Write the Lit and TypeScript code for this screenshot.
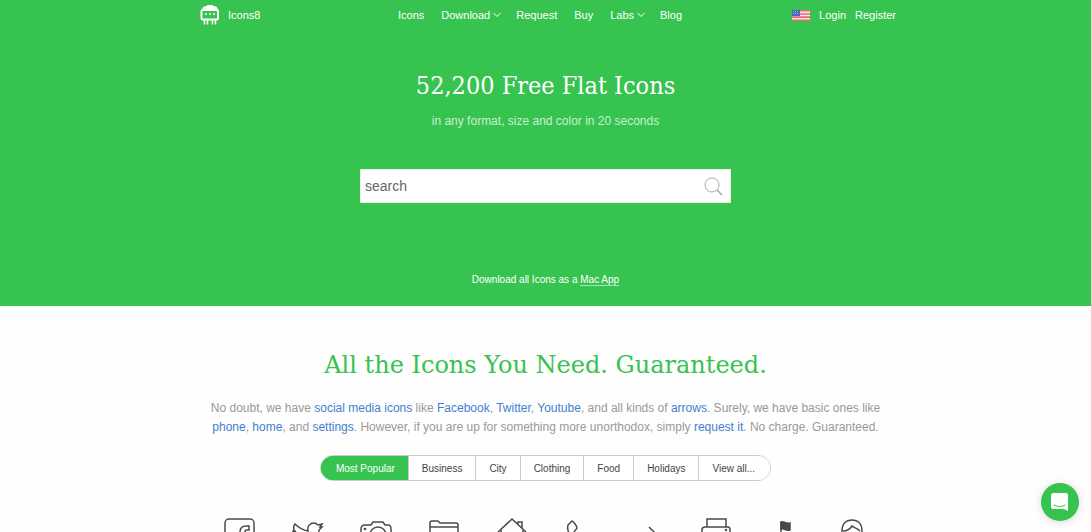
import { LitElement, html, css, svg } from "lit";
import { customElement, state } from "lit/decorators.js";
import { classMap } from "lit/directives/class-map.js";

const NAV = [
  { label: "Icons" },
  { label: "Download", menu: true },
  { label: "Request" },
  { label: "Buy" },
  { label: "Labs", menu: true },
  { label: "Blog" },
];

const TABS = ["Most Popular", "Business", "City", "Clothing", "Food", "Holidays", "View all..."];

const ICONS = [
  {
    name: "Facebook",
    art: svg`<rect x="2" y="2" width="29" height="29" rx="4"/><path d="M26 9h-3c-4 0-6 2-6 6v3h-3v4h3v9h5v-9h4v-4h-4v-3c0-1 1-2 2-2h2z"/>`,
  },
  {
    name: "Twitter",
    art: svg`<path d="M4 7c3 3 7 6 13 7-1-5 2-8 6-8 2 0 3 1 4 2l4-1-2 3h2l-3 3c0 11-7 17-16 17-4 0-7-1-10-3 4 0 6-1 8-3-3 0-5-2-6-4h3c-3-1-5-4-5-6l3 1c-3-2-3-5-1-8z"/>`,
  },
  {
    name: "Camera",
    art: svg`<path d="M2 12c0-3 1-4 4-4h6l2-3h10l2 3h3c2 0 3 1 3 4v14c0 2-1 3-3 3H5c-2 0-3-1-3-3z"/><circle cx="19" cy="18" r="8"/><circle cx="6" cy="12" r=".6"/>`,
  },
  {
    name: "Folder",
    art: svg`<path d="M3 29V6c0-1 1-2 2-2h6l2 2h16c1 0 2 1 2 2v21z"/><path d="M3 10h28"/>`,
  },
  {
    name: "Home",
    art: svg`<path d="M3 15L17 2l14 13M6 13v17h8V20h6v10h8V13M23 7V5h4v7"/>`,
  },
  {
    name: "Phone",
    art: svg`<path d="M5 8l4-4c1 0 5 5 5 7 0 1-3 3-3 4 0 2 6 8 8 8 1 0 2-3 4-3s6 4 6 5l-4 5c-8 2-23-14-20-22z"/>`,
  },
  {
    name: "Arrow",
    art: svg`<path d="M18 10l9 9-9 9M5 19h22"/>`,
  },
  {
    name: "Printer",
    art: svg`<path d="M8 10V2h19v8M8 23H3V13c0-2 1-3 3-3h23c1 0 2 1 2 3v10h-4M8 18h19v13H8z"/><circle cx="27" cy="13" r=".5"/>`,
  },
  {
    name: "Flag",
    art: svg`<path d="M14 5v26"/><path class="solid" d="M14 5c3-1 5 2 9 1v7c-4 1-6-2-9-1z"/>`,
  },
  {
    name: "Customer",
    art: svg`<path d="M7 14c0-7 4-11 10-11s10 4 10 11v3c0 6-4 12-10 12S7 23 7 17z"/><path d="M8 14c5 0 7-2 9-5 2 2 5 2 8 5"/>`,
  },
];

@customElement("app-root")
export class AppRoot extends LitElement {
  static styles = css`
    :host {
      display: block;
      height: 100vh;
      overflow-y: auto;
      scrollbar-width: none;
      background: #fefefe;
      font-family: "Liberation Sans", Arial, sans-serif;
      font-size: 11px;
      color: #999;
    }
    a { text-decoration: none; color: inherit; }
    h1, h2, p { margin: 0; font-weight: 400; }
    h1 {
      padding-top: 40px;
      font-family: "DejaVu Serif Condensed", "DejaVu Serif", serif;
      font-size: 25px;
      line-height: 32px;
    }
    h2 {
      font-family: "DejaVu Serif", serif;
      font-size: 24px;
      line-height: 32px;
      color: #37c34f;
    }
    svg { display: block; }
    .hero {
      background: #37c34f;
      color: #fff;
      text-align: center;
      padding-bottom: 20px;
    }
    .bar {
      box-sizing: border-box;
      max-width: 701px;
      margin: 0 auto;
      padding-left: 5px;
      height: 30px;
      display: grid;
      grid-template-columns: 198px 1fr auto;
      align-items: center;
    }
    .brand, .nav, .account, .nav a { display: flex; align-items: center; }
    .brand { gap: 8px; }
    .nav { gap: 17px; }
    .account { gap: 9px; }
    .chevron { margin: 0 -2px 0 3px; }
    .tagline { margin-top: 11px; font-size: 12px; line-height: 16px; color: #c9f0cf; }
    .search {
      box-sizing: border-box;
      max-width: 371px;
      height: 34px;
      margin: 40px auto 0;
      display: flex;
      background: #fff;
      border: 1px solid #e4f5e7;
    }
    .search input {
      flex: 1;
      min-width: 0;
      border: 0;
      padding: 0 4px;
      background: none;
      font: 14px "Liberation Sans", Arial, sans-serif;
      color: #666;
      outline: none;
    }
    .search input::placeholder { color: #666; opacity: 1; }
    .search button { border: 0; padding: 0 7px; background: none; }
    .app-note { margin-top: 70px; font-size: 10px; line-height: 13px; }
    .app-note a { border-bottom: 1px solid #a9e3b2; }
    .content { text-align: center; padding: 43px 16px 24px; }
    .intro {
      max-width: 680px;
      margin: 18px auto 0;
      font-size: 12px;
      line-height: 19px;
    }
    .intro a { color: #3f80d0; }
    .tabs {
      display: inline-flex;
      margin-top: 18px;
      border: 1px solid #ccc;
      border-radius: 13px;
      overflow: hidden;
    }
    .tab {
      height: 24px;
      border: 0;
      border-left: 1px solid #ccc;
      padding: 0 13px;
      background: #fff;
      color: #444;
      font: 10px "Liberation Sans", Arial, sans-serif;
    }
    .tab:first-child { padding-left: 15px; border-left: 0; }
    .tab:last-child { padding-right: 15px; }
    .tab.active { background: #37c34f; color: #fff; box-shadow: 0 0 0 1px #37c34f; }
    .icons {
      max-width: 680px;
      margin: 36px auto 0;
      display: grid;
      grid-template-columns: repeat(10, 1fr);
      justify-items: center;
    }
    .icons svg { fill: none; stroke: #4a4a4a; stroke-width: 1.5; }
    .icons .solid { fill: #4a4a4a; }
    .chat {
      position: fixed;
      right: 12px;
      bottom: 11px;
      width: 38px;
      height: 38px;
      padding: 0;
      border: 0;
      border-radius: 50%;
      background: #37c34f;
      display: grid;
      place-items: center;
      box-shadow: 0 1px 8px rgba(0, 0, 0, 0.15);
    }
  `;

  @state() private active = TABS[0];

  render() {
    return html`
      <header class="hero">
        <div class="bar">
          <a class="brand" href="#">
            <svg width="20" height="20" viewBox="0 0 20 20" fill="none" stroke="#fff">
              <path d="M3 5C2 2 5 1 6 2c1-2 3-2 4-1 1-1 3-1 4 1 1-1 4 0 3 3z" fill="#fff" />
              <rect x="1.5" y="5" width="16.5" height="9.5" rx="1" stroke-width="2" />
              <path d="M5 9h2M9 9h2M13 9h2" stroke-width="1.5" />
              <path d="M4.5 15v4.5M7.5 15v4.5M12.5 15v4.5M15.5 15v4.5" stroke-width="1.5" />
            </svg>
            Icons8
          </a>
          <nav class="nav">
            ${NAV.map(
              (item) => html`<a href="#">${item.label}${item.menu
                ? html`<svg class="chevron" width="8" height="6" viewBox="0 0 8 6" fill="none" stroke="#fff">
                    <path d="M.5 1L4 4.500l3.500-3.500" />
                  </svg>`
                : ""}</a>`
            )}
          </nav>
          <div class="account">
            <svg width="18" height="11" viewBox="0 0 18 11" role="img" aria-label="English">
              <rect width="18" height="11" fill="#f3e9e9" />
              <path d="M0 .8h18M0 4h18M0 7.1h18M0 10.2h18" stroke="#e5696d" stroke-width="1.6" />
              <rect width="8" height="6" fill="#5364b5" />
              <path d="M1 1.5h6M1 3.5h6" stroke="#aab4de" stroke-dasharray="1 1" />
            </svg>
            <a href="#">Login</a>
            <a href="#">Register</a>
          </div>
        </div>
        <h1>52,200 Free Flat Icons</h1>
        <p class="tagline">in any format, size and color in 20 seconds</p>
        <form class="search" @submit=${(e: Event) => e.preventDefault()}>
          <input type="text" placeholder="search" aria-label="search" />
          <button aria-label="Find icons">
            <svg width="19" height="19" viewBox="0 0 19 19" fill="none" stroke="#aaa">
              <circle cx="8" cy="8" r="7" />
              <path d="M13 13l5 5" stroke-width="1.6" />
            </svg>
          </button>
        </form>
        <p class="app-note">Download all Icons as a <a href="#">Mac App</a></p>
      </header>
      <main class="content">
        <h2>All the Icons You Need. Guaranteed.</h2>
        <p class="intro">
          No doubt, we have <a href="#">social media icons</a> like <a href="#">Facebook</a>,
          <a href="#">Twitter</a>, <a href="#">Youtube</a>, and all kinds of <a href="#">arrows</a>.
          Surely, we have basic ones like <a href="#">phone</a>, <a href="#">home</a>, and
          <a href="#">settings</a>. However, if you are up for something more unorthodox, simply
          <a href="#">request it</a>. No charge. Guaranteed.
        </p>
        <div class="tabs">
          ${TABS.map(
            (tab) => html`<button
              class=${classMap({ tab: true, active: tab === this.active })}
              @click=${() => (this.active = tab)}
            >${tab}</button>`
          )}
        </div>
        <div class="icons">
          ${ICONS.map(
            (icon) => html`<a href="#" aria-label=${icon.name}>
              <svg width="34" height="34" viewBox="0 0 34 34">${icon.art}</svg>
            </a>`
          )}
        </div>
      </main>
      <button class="chat" aria-label="Open chat">
        <svg width="20" height="20" viewBox="0 0 20 20">
          <path d="M3 1h13c1 0 2 1 2 2v16l-4-2H3c-1 0-2-1-2-2V3c0-1 1-2 2-2z" fill="#fff" />
          <path d="M4 13c3 2 8 2 11 0" fill="none" stroke="#37c34f" stroke-linecap="round" />
        </svg>
      </button>
    `;
  }
}
